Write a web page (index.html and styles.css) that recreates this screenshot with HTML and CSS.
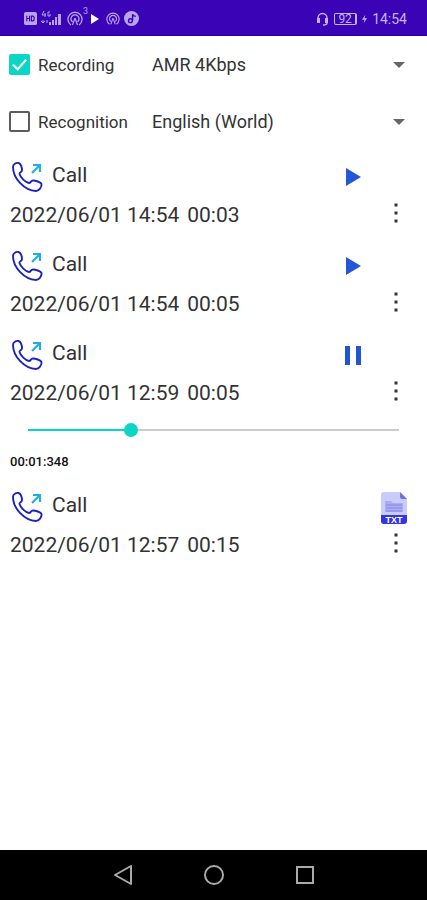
FILE: index.html
```html
<!DOCTYPE html>
<html lang="en">
<head>
<meta charset="utf-8">
<meta name="viewport" content="width=device-width, initial-scale=1">
<title>Call recordings</title>
<link rel="stylesheet" href="styles.css">
</head>
<body>
<svg class="defs" aria-hidden="true">
  <symbol id="phone" viewBox="0 0 34 34">
    <path d="M3 7C3 4 6 2.500 8.500 3C11 3.500 12 8 12 10C12 12.500 9 12 9.500 14C10.500 17.500 15.500 22.500 19 23C21 23 20.500 20.500 23 20.500C25 20.500 31 22 31.500 24C32 27 29 31 26 31C14 30.500 3 18 3 7Z" fill="none" stroke="#1c24b8" stroke-width="1.900" stroke-linejoin="round"/>
    <path d="M22 13L30 5M23 5H30V12" fill="none" stroke="#20aee6" stroke-width="2.200"/>
  </symbol>
  <symbol id="play" viewBox="0 0 24 24"><path d="M5 3L20 12L5 21Z" fill="#2457d6"/></symbol>
  <symbol id="pause" viewBox="0 0 24 24"><path d="M4 3H9V22H4ZM15 3H20V22H15Z" fill="#1f55cf"/></symbol>
  <symbol id="more" viewBox="0 0 24 24"><path d="M10.500 2.500h3v3h-3zM10.500 10.500h3v3h-3zM10.500 18.500h3v3h-3z" fill="#333"/></symbol>
  <symbol id="arrow" viewBox="0 0 12 6"><path d="M0 0H12L6 6Z" fill="#666"/></symbol>
  <symbol id="cast" viewBox="0 0 16 16">
    <path d="M4 14A7 7 0 1 1 12 14M5.500 11A4 4 0 1 1 10.500 11" fill="none" stroke="currentColor" stroke-width="1.300"/>
    <path d="M8 7L10.500 14M8 7L5.500 14" fill="none" stroke="currentColor" stroke-width="1.200"/>
  </symbol>
</svg>
<div class="screen">
  <header class="status">
    <div class="status-group">
      <svg class="i-hd" viewBox="0 0 14 14"><rect width="14" height="14" rx="2" fill="currentColor"/><path d="M3 4V10M6 4V10M3 7H6M8 4.500V9.500H9.500Q11 9.500 11 7Q11 4.500 9.500 4.500Z" fill="none" stroke="#3a03b5" stroke-width="1.200"/></svg>
      <svg class="i-signal" viewBox="0 0 21 15"><path d="M3 0L1 4H5M4 2V6M9 1H7V5H9V3M2 9V12M0 10L2 12L4 10M6 12V9" fill="none" stroke="currentColor"/><path d="M8 11h2v3H8zM11 9h2v5h-2zM14 6h2v8h-2zM17 3h3v11h-3z" fill="currentColor"/></svg>
      <span class="cast"><svg class="i-cast"><use href="#cast"/></svg><sup>3</sup></span>
      <svg class="i-play" viewBox="0 0 8 10"><path d="M0 0L8 5L0 10Z" fill="#fff"/></svg>
      <svg class="i-cast i-cast-small"><use href="#cast"/></svg>
      <svg class="i-music" viewBox="0 0 14 14"><circle cx="7" cy="7" r="7" fill="currentColor"/><circle cx="6" cy="9" r="1.800" fill="none" stroke="#3a03b5" stroke-width="1.300"/><path d="M8 9V3Q9 5 11 5" fill="none" stroke="#3a03b5" stroke-width="1.300"/></svg>
    </div>
    <div class="status-group status-right">
      <svg class="i-head" viewBox="0 0 13 14"><path d="M2 8V6A4.500 4.500 0 0 1 11 6V11Q11 13 7 13" fill="none" stroke="currentColor" stroke-width="1.400"/><path d="M1 6H4V11H1ZM9 6H12V11H9Z" fill="currentColor"/></svg>
      <span class="battery">92</span>
      <svg class="i-bolt" viewBox="0 0 6 10"><path d="M4 0L0 6H3L2 10L6 4H3Z" fill="currentColor"/></svg>
      <time>14:54</time>
    </div>
  </header>

  <main>
    <form class="settings">
      <div class="setting">
        <label class="check"><span class="box"><input type="checkbox" checked><svg class="tick" viewBox="0 0 22 22"><path d="M4 11L9 16L18 6" fill="none" stroke="#fff" stroke-width="2.200"/></svg></span>Recording</label>
        <div class="picker"><select aria-label="Recording format"><option>AMR 4Kbps</option></select><svg class="i-arrow"><use href="#arrow"/></svg></div>
      </div>
      <div class="setting">
        <label class="check"><span class="box"><input type="checkbox"></span>Recognition</label>
        <div class="picker"><select aria-label="Recognition language"><option>English (World)</option></select><svg class="i-arrow"><use href="#arrow"/></svg></div>
      </div>
    </form>

    <ul class="records">
      <li>
        <div class="title"><svg class="i-phone"><use href="#phone"/></svg><span class="name">Call</span><button class="control" aria-label="Play"><svg><use href="#play"/></svg></button></div>
        <div class="details"><span>2022/06/01 14:54</span><span>00:03</span><button class="more" aria-label="More"><svg><use href="#more"/></svg></button></div>
      </li>
      <li>
        <div class="title"><svg class="i-phone"><use href="#phone"/></svg><span class="name">Call</span><button class="control" aria-label="Play"><svg><use href="#play"/></svg></button></div>
        <div class="details"><span>2022/06/01 14:54</span><span>00:05</span><button class="more" aria-label="More"><svg><use href="#more"/></svg></button></div>
      </li>
      <li>
        <div class="title"><svg class="i-phone"><use href="#phone"/></svg><span class="name">Call</span><button class="control" aria-label="Pause"><svg><use href="#pause"/></svg></button></div>
        <div class="details"><span>2022/06/01 12:59</span><span>00:05</span><button class="more" aria-label="More"><svg><use href="#more"/></svg></button></div>
        <div class="seek"><input type="range" id="seek" min="0" max="5000" value="1348" aria-label="Position" style="--played: 27%"></div>
        <output class="position" for="seek">00:01:348</output>
      </li>
      <li>
        <div class="title"><svg class="i-phone"><use href="#phone"/></svg><span class="name">Call</span><button class="file" aria-label="Open transcript">
          <svg viewBox="0 0 26 33"><path d="M3 0H19L26 7V24H0V3Q0 0 3 0Z" fill="#c9cbfa"/><path d="M19 0V5Q19 7 21 7H26Z" fill="#6d70e0"/><path d="M4 9H10L12 11H22V20H4Z" fill="#a9adf2"/><path d="M5 13H21M5 16H21M5 19H21" stroke="#8589e4"/><path d="M0 23H26V29Q26 32 23 32H3Q0 32 0 29Z" fill="#3434e0"/><text x="13" y="31" class="file-type">TXT</text></svg></button></div>
        <div class="details"><span>2022/06/01 12:57</span><span>00:15</span><button class="more" aria-label="More"><svg><use href="#more"/></svg></button></div>
      </li>
    </ul>
  </main>

  <nav class="navbar" aria-label="System">
    <button aria-label="Back"><svg viewBox="0 0 22 22"><path d="M19 2V20L3 11Z" fill="none" stroke="#aaa" stroke-width="2" stroke-linejoin="round"/></svg></button>
    <button aria-label="Home"><svg viewBox="0 0 22 22"><circle cx="11" cy="11" r="9" fill="none" stroke="#aaa" stroke-width="2"/></svg></button>
    <button aria-label="Recents"><svg viewBox="0 0 22 22"><rect x="3" y="3" width="16" height="16" fill="none" stroke="#aaa" stroke-width="2"/></svg></button>
  </nav>
</div>
</body>
</html>
```
FILE: styles.css
```css
* { box-sizing: border-box; }
body { margin: 0; background: #fff; color: #333; font-family: Roboto, "Liberation Sans", sans-serif; }
button { padding: 0; border: 0; background: none; display: grid; place-items: center; }
svg { display: block; flex: none; }
.defs { position: absolute; width: 0; height: 0; }
.screen { min-height: 100vh; display: flex; flex-direction: column; }
main { flex: 1; }

.status { height: 36px; padding: 2px 20px 0 24px; display: flex; justify-content: space-between; align-items: center; background: #3a03b5; border-bottom: 1px solid #2a0098; color: #b9a3ec; }
.status-group { display: flex; align-items: center; gap: 4px; }
.status-right { gap: 5px; color: #c5b4f0; }
.status time { font-size: 14px; }
.i-hd { width: 13px; height: 13px; }
.i-signal { width: 21px; height: 15px; }
.cast { position: relative; width: 20px; margin-left: 1px; }
.cast sup { position: absolute; right: -1px; top: -6px; font-size: 9px; line-height: 12px; }
.i-cast { width: 16px; height: 16px; }
.i-play { width: 8px; height: 10px; }
.i-cast-small { width: 14px; height: 14px; margin-left: 3px; }
.i-music { width: 15px; height: 15px; }
.i-head { width: 13px; height: 14px; }
.battery { width: 23px; height: 12px; border: 1px solid currentColor; border-right-width: 2px; border-radius: 2px; font-size: 12px; line-height: 11px; text-align: center; }
.i-bolt { width: 5px; height: 10px; }

.settings { display: grid; }
.setting { height: 57px; padding: 0 22px 0 9px; display: grid; grid-template-columns: 143px 1fr; align-items: center; }
.check { display: flex; align-items: center; gap: 8px; font-size: 17px; }
.box { display: grid; }
.box > * { grid-area: 1 / 1; }
.box input { appearance: none; margin: 0; width: 21px; height: 21px; border: 2px solid #5c5c5c; border-radius: 2px; }
.box input:checked { border-color: #0bd5c4; background: #0bd5c4; }
.tick { width: 21px; height: 21px; pointer-events: none; }
.picker { display: grid; align-items: center; }
.picker > * { grid-area: 1 / 1; }
.picker select { appearance: none; width: 100%; height: 40px; padding: 0; border: 0; background: none; color: #333; font: 18px Roboto, "Liberation Sans", sans-serif; }
.i-arrow { width: 12px; height: 6px; justify-self: end; pointer-events: none; }

.records { list-style: none; margin: 0; padding: 0; font-size: 21px; }
.title { height: 50px; padding: 0 20px 0 10px; display: flex; align-items: center; gap: 8px; }
.i-phone { width: 34px; height: 34px; margin-top: 4px; }
.name { flex: 1; }
.control { width: 24px; height: 24px; margin: 4px 42px 0 0; }
.control svg, .more svg { width: 24px; height: 24px; }
.file { margin-top: 6px; }
.file svg { width: 26px; height: 33px; }
.file-type { fill: #fff; font-size: 9px; font-weight: 900; text-anchor: middle; }
.details { height: 39px; padding: 0 19px 9px 10px; display: flex; align-items: center; gap: 8px; }
.more { margin: 0 0 4px auto; }
.seek { height: 26px; padding: 0 28px; display: flex; align-items: center; }
.seek input { appearance: none; width: 100%; height: 14px; margin: 0; background: linear-gradient(to right, #0bd5c4 var(--played), #ccc var(--played)) center / 100% 2px no-repeat; }
.seek input::-webkit-slider-thumb { appearance: none; width: 14px; height: 14px; border-radius: 50%; background: #0bd5c4; }
.position { display: block; padding-left: 10px; font-size: 13px; line-height: 37px; font-weight: 500; color: #111; }

.navbar { height: 50px; padding: 0 77px; display: flex; justify-content: space-around; align-items: center; background: #000; }
.navbar svg { width: 22px; height: 22px; }
```
